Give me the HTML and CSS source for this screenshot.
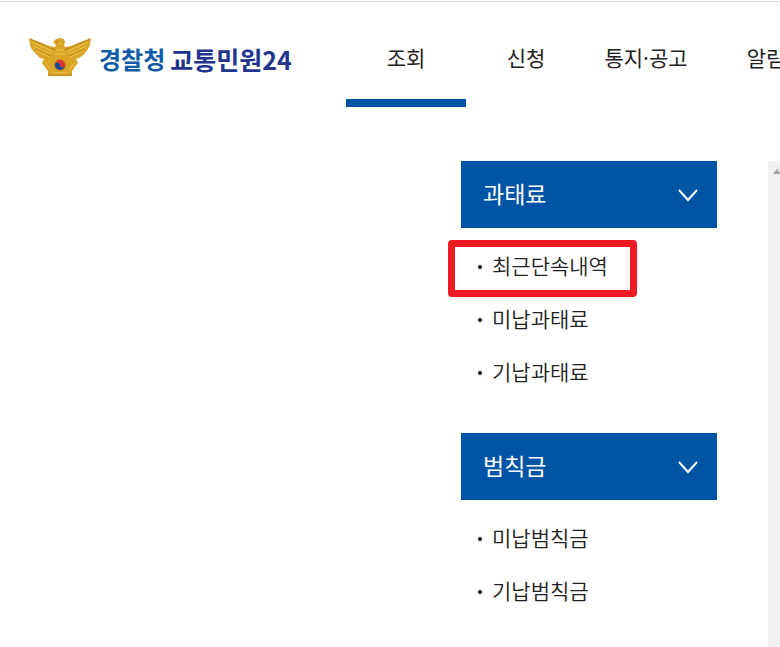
FILE: index.html
```html
<!DOCTYPE html>
<html lang="ko">
<head>
  <meta charset="UTF-8">
  <meta name="viewport" content="width=device-width, initial-scale=1">
  <title>경찰청 교통민원24</title>
  <link rel="stylesheet" href="styles.css">
</head>
<body>
  <header class="header">
    <a class="logo" href="#">
      <svg class="logo-emblem" viewBox="0 0 64 40" aria-hidden="true">
        <path fill="#dba528" d="M1 1 L6 3 L14 6 L21 9 L27 10 L28 8 L25 5 L28 2 L32 1 L36 2 L37 5 L36 8 L37 10 L43 9 L50 6 L58 3 L63 1 L62 8 L60 12 L57 16 L54 19 L51 21 L48 22 L50 26 L46 31 L44 34 L44 39 L20 39 L20 34 L17 30 L14 26 L16 22 L12 21 L9 18 L6 15 L3 11 L2 8 Z"/>
        <path fill="none" stroke="#f1c548" stroke-width="1" d="M4 5 L13 9 L24 14 M6 9 L13 13 L23 17 M9 14 L15 17 L22 20 M60 5 L51 9 L40 14 M58 9 L51 13 L41 17 M55 14 L49 17 L42 20 M30 4 L34 8 M27 13 L37 13 M27 17 L37 17 M18 26 L23 33 M46 26 L41 33 M24 36 L40 36"/>
        <path fill="none" stroke="#b98420" stroke-width="1" d="M2 2 L13 7 L22 11 L28 13 M8 12 L15 15 L23 19 M62 2 L51 7 L42 11 L36 13 M56 12 L49 15 L41 19 M28 5 L31 4 M20 38 L44 38"/>
        <circle cx="32" cy="28" r="6" fill="#c08a1b"/>
        <path fill="#e0323c" d="M27 28 A5 5 0 0 1 37 28 A2.5 2.5 0 0 1 32 28 A2.5 2.5 0 0 0 27 28 Z"/>
        <path fill="#174a9c" d="M27 28 A2.5 2.5 0 0 1 32 28 A2.5 2.5 0 0 0 37 28 A5 5 0 0 1 27 28 Z"/>
      </svg>
      <span class="logo-text"><span class="logo-agency">경찰청</span><span class="logo-service">교통민원24</span></span>
    </a>
    <nav class="nav">
      <a class="nav-link nav-link-active" href="#">조회</a>
      <a class="nav-link" href="#">신청</a>
      <a class="nav-link" href="#">통지·공고</a>
      <a class="nav-link" href="#">알림</a>
    </nav>
  </header>

  <main class="main">
    <div class="menu">
      <section class="group">
        <button class="group-title" type="button" aria-expanded="true">
          과태료
          <svg class="chevron" viewBox="0 0 20 13" aria-hidden="true"><path d="M1 1 L10 11 L19 1"/></svg>
        </button>
        <ul class="list">
          <li class="item item-marked"><a href="#">최근단속내역</a></li>
          <li class="item"><a href="#">미납과태료</a></li>
          <li class="item"><a href="#">기납과태료</a></li>
        </ul>
      </section>
      <section class="group">
        <button class="group-title" type="button" aria-expanded="true">
          범칙금
          <svg class="chevron" viewBox="0 0 20 13" aria-hidden="true"><path d="M1 1 L10 11 L19 1"/></svg>
        </button>
        <ul class="list">
          <li class="item"><a href="#">미납범칙금</a></li>
          <li class="item"><a href="#">기납범칙금</a></li>
        </ul>
      </section>
    </div>
    <div class="scrollbar">
      <svg class="scrollbar-arrow" viewBox="0 0 8 5" aria-hidden="true"><path d="M0 5 L4 0 L8 5 Z"/></svg>
    </div>
  </main>
</body>
</html>
```

FILE: styles.css
```css
*,
*::before,
*::after {
  box-sizing: border-box;
}

body {
  display: flex;
  flex-direction: column;
  min-height: 100vh;
  margin: 0;
  padding-top: 1px;
  overflow-x: hidden;
  background-color: #fff;
  color: #222;
  font-family: 'Noto Sans CJK KR', sans-serif;
  font-size: 21px;
  line-height: 30px;
}

a {
  color: inherit;
  text-decoration: none;
}

.header {
  display: flex;
  justify-content: space-between;
  border-top: 1px solid #ddd;
  overflow: hidden;
}

.logo {
  display: flex;
  flex: none;
  align-items: center;
  gap: 7px;
  width: 346px;
  height: 105px;
  padding: 0 0 0 28px;
}

.logo-emblem {
  flex: none;
  width: 64px;
  height: 40px;
  margin-top: 4px;
}

.logo-text {
  display: flex;
  gap: 5px;
  margin-top: 8px;
  color: #21358f;
  font-weight: 700;
  white-space: nowrap;
}

.logo-agency {
  color: #105ba8;
  font-size: 24px;
}

.logo-service {
  font-size: 25px;
}

.nav {
  display: flex;
  flex: 1;
}

.nav-link {
  flex: none;
  width: 120px;
  padding: 40px 0 27px;
  border-bottom: 8px solid transparent;
  text-align: center;
}

.nav-link-active {
  border-color: #0054a6;
}

.main {
  display: flex;
  flex: 1;
  justify-content: flex-end;
  gap: 51px;
  padding-top: 54px;
}

.menu {
  width: 256px;
}

.group {
  margin-bottom: 34px;
}

.group:last-child {
  margin-bottom: 0;
}

.group-title {
  display: flex;
  align-items: center;
  justify-content: space-between;
  width: 100%;
  height: 67px;
  border: none;
  padding: 0 19px 3px 22px;
  background-color: #0054a6;
  color: #fff;
  font-family: inherit;
  font-size: 23px;
}

.chevron {
  width: 20px;
  height: 13px;
  margin-top: 4px;
  fill: none;
  stroke: #fff;
  stroke-width: 2;
}

.list {
  margin: 0;
  padding: 12px 0 0;
  list-style: none;
}

.item {
  position: relative;
  display: flex;
  align-items: center;
  gap: 10px;
  height: 53px;
  padding-left: 17px;
  font-weight: 350;
}

.item a {
  padding-bottom: 4px;
}

.item::before {
  content: '';
  width: 4px;
  height: 4px;
  border-radius: 50%;
  background-color: #000;
}

/* red frame around the highlighted item */
.item-marked::after {
  content: '';
  position: absolute;
  top: 0;
  left: -13px;
  width: 189px;
  height: 57px;
  border: 7px solid #ed1c24;
  border-radius: 4px;
  pointer-events: none;
}

.scrollbar {
  width: 12px;
  padding: 8px 0 0 5px;
  background-color: #f0f0f0;
  overflow: hidden;
}

.scrollbar-arrow {
  display: block;
  width: 8px;
  height: 5px;
  fill: #a3a3a3;
}
```
